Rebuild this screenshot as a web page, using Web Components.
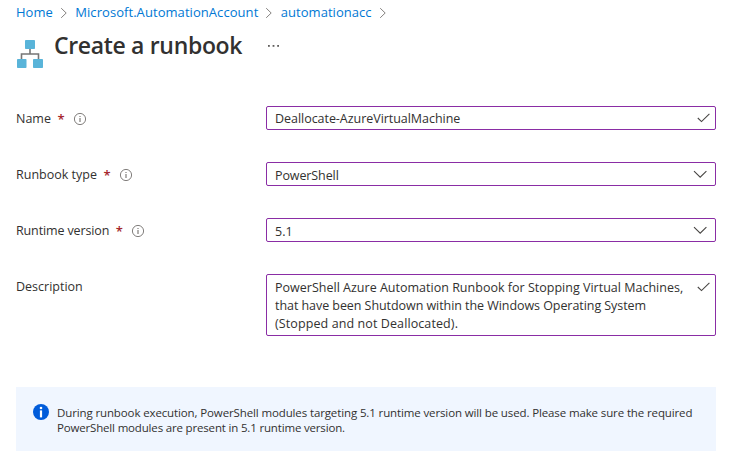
<!DOCTYPE html>
<html lang="en">
<head>
<meta charset="utf-8">
<title>Create a runbook</title>
<style>
html,body{margin:0;background:#fff}
body{font:12.5px/18px "Open Sans","Noto Sans",sans-serif;color:#323130}
</style>
</head>
<body>
<runbook-page></runbook-page>

<template id="t-crumb">
<style>
:host{display:flex;align-items:center;height:18px;font-size:13px;line-height:18px;color:#0078d4;white-space:nowrap}
svg{flex:none;margin:2px 7.5px 0 7px;width:8px;height:12px}
</style>
<slot></slot><svg viewBox="0 0 8 12" fill="none" stroke="#85827f"><path d="M1.2 1.2 6.2 6 1.2 10.8"/></svg>
</template>

<template id="t-header">
<style>
:host{display:flex;height:40px}
.logo{width:28px;height:30px;margin:12px 10px 0 0;flex:none}
h1{margin:0;font-size:23px;line-height:32px;font-weight:600;white-space:nowrap;letter-spacing:-.33px;padding-top:3px}
.more{width:14px;height:4px;margin:18px 0 0 25px}
</style>
<svg class="logo" viewBox="0 0 28 30">
<path d="M14 9v7M5.5 21v-5h17v5" fill="none" stroke="#767676" stroke-width="1.6"/>
<g fill="#59b4d9"><rect x="9" y="2" width="10" height="9" rx=".8"/><rect x="1" y="21" width="9.5" height="9" rx=".8"/><rect x="17" y="21" width="10" height="9" rx=".8"/></g>
</svg>
<h1><slot></slot></h1>
<svg class="more" viewBox="0 0 14 4" fill="#605e5c"><rect x="1" y="1" width="1.8" height="1.8"/><rect x="5.6" y="1" width="1.8" height="1.8"/><rect x="10.2" y="1" width="1.8" height="1.8"/></svg>
</template>

<template id="t-row">
<style>
:host{display:grid;grid-template-columns:250px 450px}
.label{display:flex;align-items:center;height:24px;padding-top:1px;margin-bottom:-1px;white-space:nowrap}
.star{color:#a4262c;margin-left:6.5px;font-size:13px;width:6.5px;font-weight:600;display:none}
svg{display:none;width:14px;height:14px;margin-left:9px}
:host([required]) .star,:host([required]) svg{display:block}
</style>
<div class="label"><slot name="label"></slot><span class="star">*</span>
<svg viewBox="0 0 14 14"><circle cx="7" cy="7" r="5.6" fill="none" stroke="#74716e" stroke-width=".9"/><path d="M7 6v4M7 3.9v1.1" stroke="#74716e" stroke-width="1.1"/></svg></div>
<slot></slot>
</template>

<template id="t-field">
<style>
:host{display:flex;justify-content:space-between;box-sizing:border-box;height:24px;border:1px solid #8a2da5;border-radius:2px;padding:3px 5px 0 8px;white-space:nowrap}
:host([kind=select]){padding-top:4px;padding-right:8px}
:host([kind=area]){height:62px;padding-top:4px}
svg{width:13px;height:10px;margin-top:3px;flex:none}
:host([kind=select]) svg{width:14px;margin-top:2px}
path{fill:none;stroke:#484644;stroke-width:1.1}
.chev,:host([kind=select]) .check{display:none}
:host([kind=select]) .chev{display:block}
</style>
<div><slot></slot></div>
<svg class="check" viewBox="0 0 13 10"><path d="M.8 5 4.5 8.6 12.4 .9"/></svg>
<svg class="chev" viewBox="0 0 14 10"><path d="M1 2.2 7.2 8.2 13.4 2.2"/></svg>
</template>

<template id="t-banner">
<style>
:host{display:flex;box-sizing:border-box;height:64px;background:#f0f6ff;padding:18px 0 0 17px;font-size:11.5px;line-height:15px;white-space:nowrap}
svg{width:16px;height:16px;margin:-1px 8px 0 0;flex:none}
</style>
<svg viewBox="0 0 16 16"><circle cx="8" cy="8" r="8" fill="#015cda"/><circle cx="8" cy="4" r="1.3" fill="#fff"/><path d="M8 6.4v7" stroke="#fff" stroke-width="2.2"/></svg>
<div><slot></slot></div>
</template>

<template id="t-page">
<style>
:host{display:block;width:700px;padding:3px 0 0 16px}
nav{display:flex;height:23px}
.form{display:grid;gap:32px;padding-top:40px}
.l{display:block}
info-banner{margin-top:51px}
</style>
<nav><crumb-link>Home</crumb-link><crumb-link style="letter-spacing:.06px">Microsoft.AutomationAccount</crumb-link><crumb-link style="letter-spacing:.03px">automationacc</crumb-link></nav>
<page-header>Create a runbook</page-header>
<div class="form">
<form-row required><span slot="label">Name</span><form-field style="letter-spacing:-.04px">Deallocate-AzureVirtualMachine</form-field></form-row>
<form-row required><span slot="label">Runbook type</span><form-field kind="select" style="letter-spacing:-.1px">PowerShell</form-field></form-row>
<form-row required><span slot="label" style="letter-spacing:-.13px">Runtime version</span><form-field kind="select">5.1</form-field></form-row>
<form-row><span slot="label">Description</span><form-field kind="area"><span class="l" style="letter-spacing:.01px">PowerShell Azure Automation Runbook for Stopping Virtual Machines,</span><span class="l" style="letter-spacing:-.06px">that have been Shutdown within the Windows Operating System</span><span class="l" style="letter-spacing:.1px">(Stopped and not Deallocated).</span></form-field></form-row>
</div>
<info-banner><span class="l" style="letter-spacing:-.122px">During runbook execution, PowerShell modules targeting 5.1 runtime version will be used. Please make sure the required</span><span class="l" style="letter-spacing:-.17px">PowerShell modules are present in 5.1 runtime version.</span></info-banner>
</template>

<script>
const define = (name, id) => customElements.define(name, class extends HTMLElement {
  constructor() {
    super();
    this.attachShadow({mode: 'open'}).append(document.getElementById(id).content.cloneNode(true));
  }
});
define('crumb-link', 't-crumb');
define('page-header', 't-header');
define('form-row', 't-row');
define('form-field', 't-field');
define('info-banner', 't-banner');
define('runbook-page', 't-page');
</script>
</body>
</html>
